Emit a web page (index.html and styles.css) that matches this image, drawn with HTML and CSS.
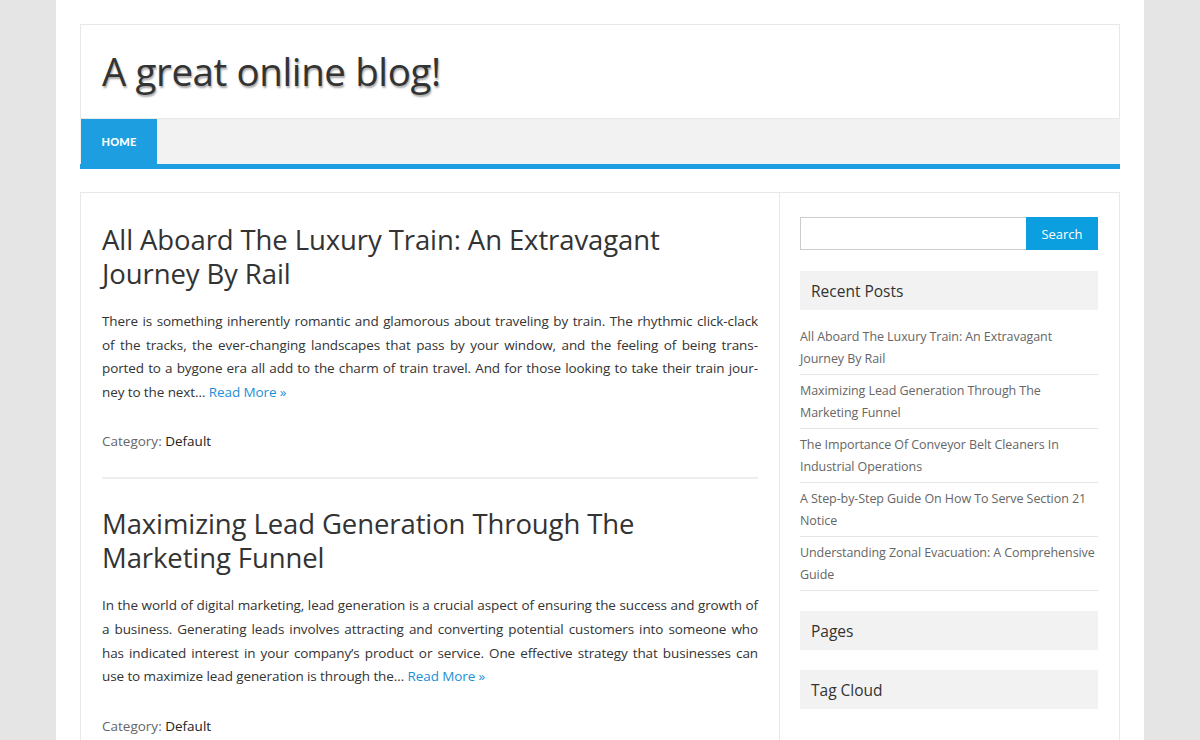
FILE: index.html
```html
<!DOCTYPE html>
<html lang="en">
<head>
<meta charset="utf-8">
<title>A great online blog!</title>
<link rel="stylesheet" href="styles.css">
</head>
<body>
<div class="page">
  <header class="site-header">
    <div class="branding">
      <h1 class="site-title">A great online blog!</h1>
    </div>
    <nav class="main-nav">
      <a class="nav-item active" href="#">Home</a>
    </nav>
  </header>

  <div class="main">
    <main class="content">
      <article class="post">
        <h2 class="post-title">All Aboard The Luxury Train: An Extravagant Journey By Rail</h2>
        <p class="excerpt">There is something inherently romantic and glamorous about traveling by train. The rhythmic click-clack of the tracks, the ever-changing landscapes that pass by your window, and the feeling of being trans&shy;ported to a bygone era all add to the charm of train travel. And for those looking to take their train jour&shy;ney to the next&hellip; <a class="more" href="#">Read More &raquo;</a></p>
        <div class="meta"><span class="meta-label">Category:</span> <a href="#">Default</a></div>
      </article>
      <article class="post">
        <h2 class="post-title">Maximizing Lead Generation Through The Marketing Funnel</h2>
        <p class="excerpt">In the world of digital marketing, lead generation is a crucial aspect of ensuring the success and growth of a business. Generating leads involves attracting and converting potential customers into someone who has indicated interest in your company&rsquo;s product or service. One effective strategy that businesses can use to maximize lead generation is through the&hellip; <a class="more" href="#">Read More &raquo;</a></p>
        <div class="meta"><span class="meta-label">Category:</span> <a href="#">Default</a></div>
      </article>
    </main>

    <aside class="sidebar">
      <form class="search">
        <input class="search-input" type="text" aria-label="Search">
        <button class="search-btn" type="button">Search</button>
      </form>
      <section class="widget">
        <h3 class="widget-title">Recent Posts</h3>
        <ul class="recent">
          <li><a href="#">All Aboard The Luxury Train: An Extravagant Journey By Rail</a></li>
          <li><a href="#">Maximizing Lead Generation Through The Marketing Funnel</a></li>
          <li><a href="#">The Importance Of Conveyor Belt Cleaners In Industrial Operations</a></li>
          <li><a href="#">A Step-by-Step Guide On How To Serve Section 21 Notice</a></li>
          <li><a href="#">Understanding Zonal Evacuation: A Comprehensive Guide</a></li>
        </ul>
      </section>
      <section class="widget">
        <h3 class="widget-title">Pages</h3>
      </section>
      <section class="widget">
        <h3 class="widget-title">Tag Cloud</h3>
      </section>
    </aside>
  </div>
</div>
</body>
</html>
```
FILE: styles.css
```css
html, body {
  margin: 0;
  padding: 0;
}
body {
  background: #e5e5e5;
  font-family: "Open Sans", "Liberation Sans", sans-serif;
  color: #333;
}
a { text-decoration: none; }

.page {
  width: 1040px;
  margin: 0 auto;
  background: #fff;
  padding: 24px 24px 0;
  min-height: 716px;
  box-sizing: content-box;
}

.site-header {
  border: 1px solid #e8e8e8;
  border-bottom: none;
}
.branding {
  height: 93px;
  display: flex;
  align-items: center;
  padding-left: 21px;
  border-bottom: 1px solid #e8e8e8;
}
.site-title {
  margin: 0;
  font-size: 38.5px;
  font-weight: 400;
  color: #333;
  letter-spacing: -0.4px;
  text-shadow: 1px 2px 2px rgba(0,0,0,0.35);
  padding-bottom: 2px;
}

.main-nav {
  display: flex;
  height: 45px;
  background: #f2f2f2;
  border-bottom: 5px solid #1c9ee0;
  margin: 0 -1px;
  padding-left: 1px;
}
.nav-item {
  display: flex;
  align-items: center;
  padding: 0 20px 1px;
  width: 36px;
  justify-content: center;
  background: #1c9ee0;
  color: #fff;
  font-family: "Lato", "Open Sans", sans-serif;
  font-weight: 900;
  font-size: 11px;
  text-transform: uppercase;
  letter-spacing: 0.2px;
}

.main {
  display: flex;
  margin-top: 23px;
  border: 1px solid #e8e8e8;
}
.content {
  width: 656px;
  padding: 30px 21px 0;
  border-right: 1px solid #e8e8e8;
}
.post {
  border-bottom: 2px solid #eeeeee;
  padding-bottom: 26px;
  margin-bottom: 28px;
}
.post-title {
  margin: 0 0 19px;
  font-size: 27.5px;
  line-height: 34px;
  font-weight: 400;
  color: #333;
  letter-spacing: -0.1px;
}
.excerpt {
  margin: 0 0 27px;
  font-size: 13.5px;
  line-height: 23.6px;
  color: #333;
  text-align: justify;
  letter-spacing: -0.1px;
}
.more { color: #1c8fd6; }
.meta {
  font-size: 13.5px;
  line-height: 20px;
}
.meta-label { color: #666; }
.meta a { color: #222; }

.sidebar {
  flex: 1;
  padding: 24px 21px 0 20px;
}
.search {
  display: flex;
  height: 33px;
  margin: 0 0 21px;
}
.search-input {
  flex: 1;
  margin: 0;
  border: 1px solid #ccc;
  border-right: none;
  padding: 0 8px;
  height: 33px;
  box-sizing: border-box;
  outline: none;
}
.search-btn {
  width: 72px;
  height: 33px;
  margin: 0;
  border: none;
  background: #0b9fe0;
  color: #fff;
  font-family: "Open Sans", sans-serif;
  font-size: 13px;
  padding: 0;
}
.widget {
  margin-bottom: 20px;
}
.widget-title {
  margin: 0;
  background: #f2f2f2;
  height: 39px;
  display: flex;
  align-items: center;
  padding: 0 11px;
  font-size: 15.5px;
  font-weight: 400;
  color: #333;
}
.recent {
  list-style: none;
  margin: 16px 0 0;
  padding: 0;
}
.recent li {
  border-bottom: 1px solid #e5e5e5;
  padding: 0 0 5px;
  margin-bottom: 5px;
  font-size: 12.5px;
  line-height: 21.5px;
  letter-spacing: -0.08px;
}
.recent li:last-child { margin-bottom: 0; }
.recent a { color: #666; }
```
